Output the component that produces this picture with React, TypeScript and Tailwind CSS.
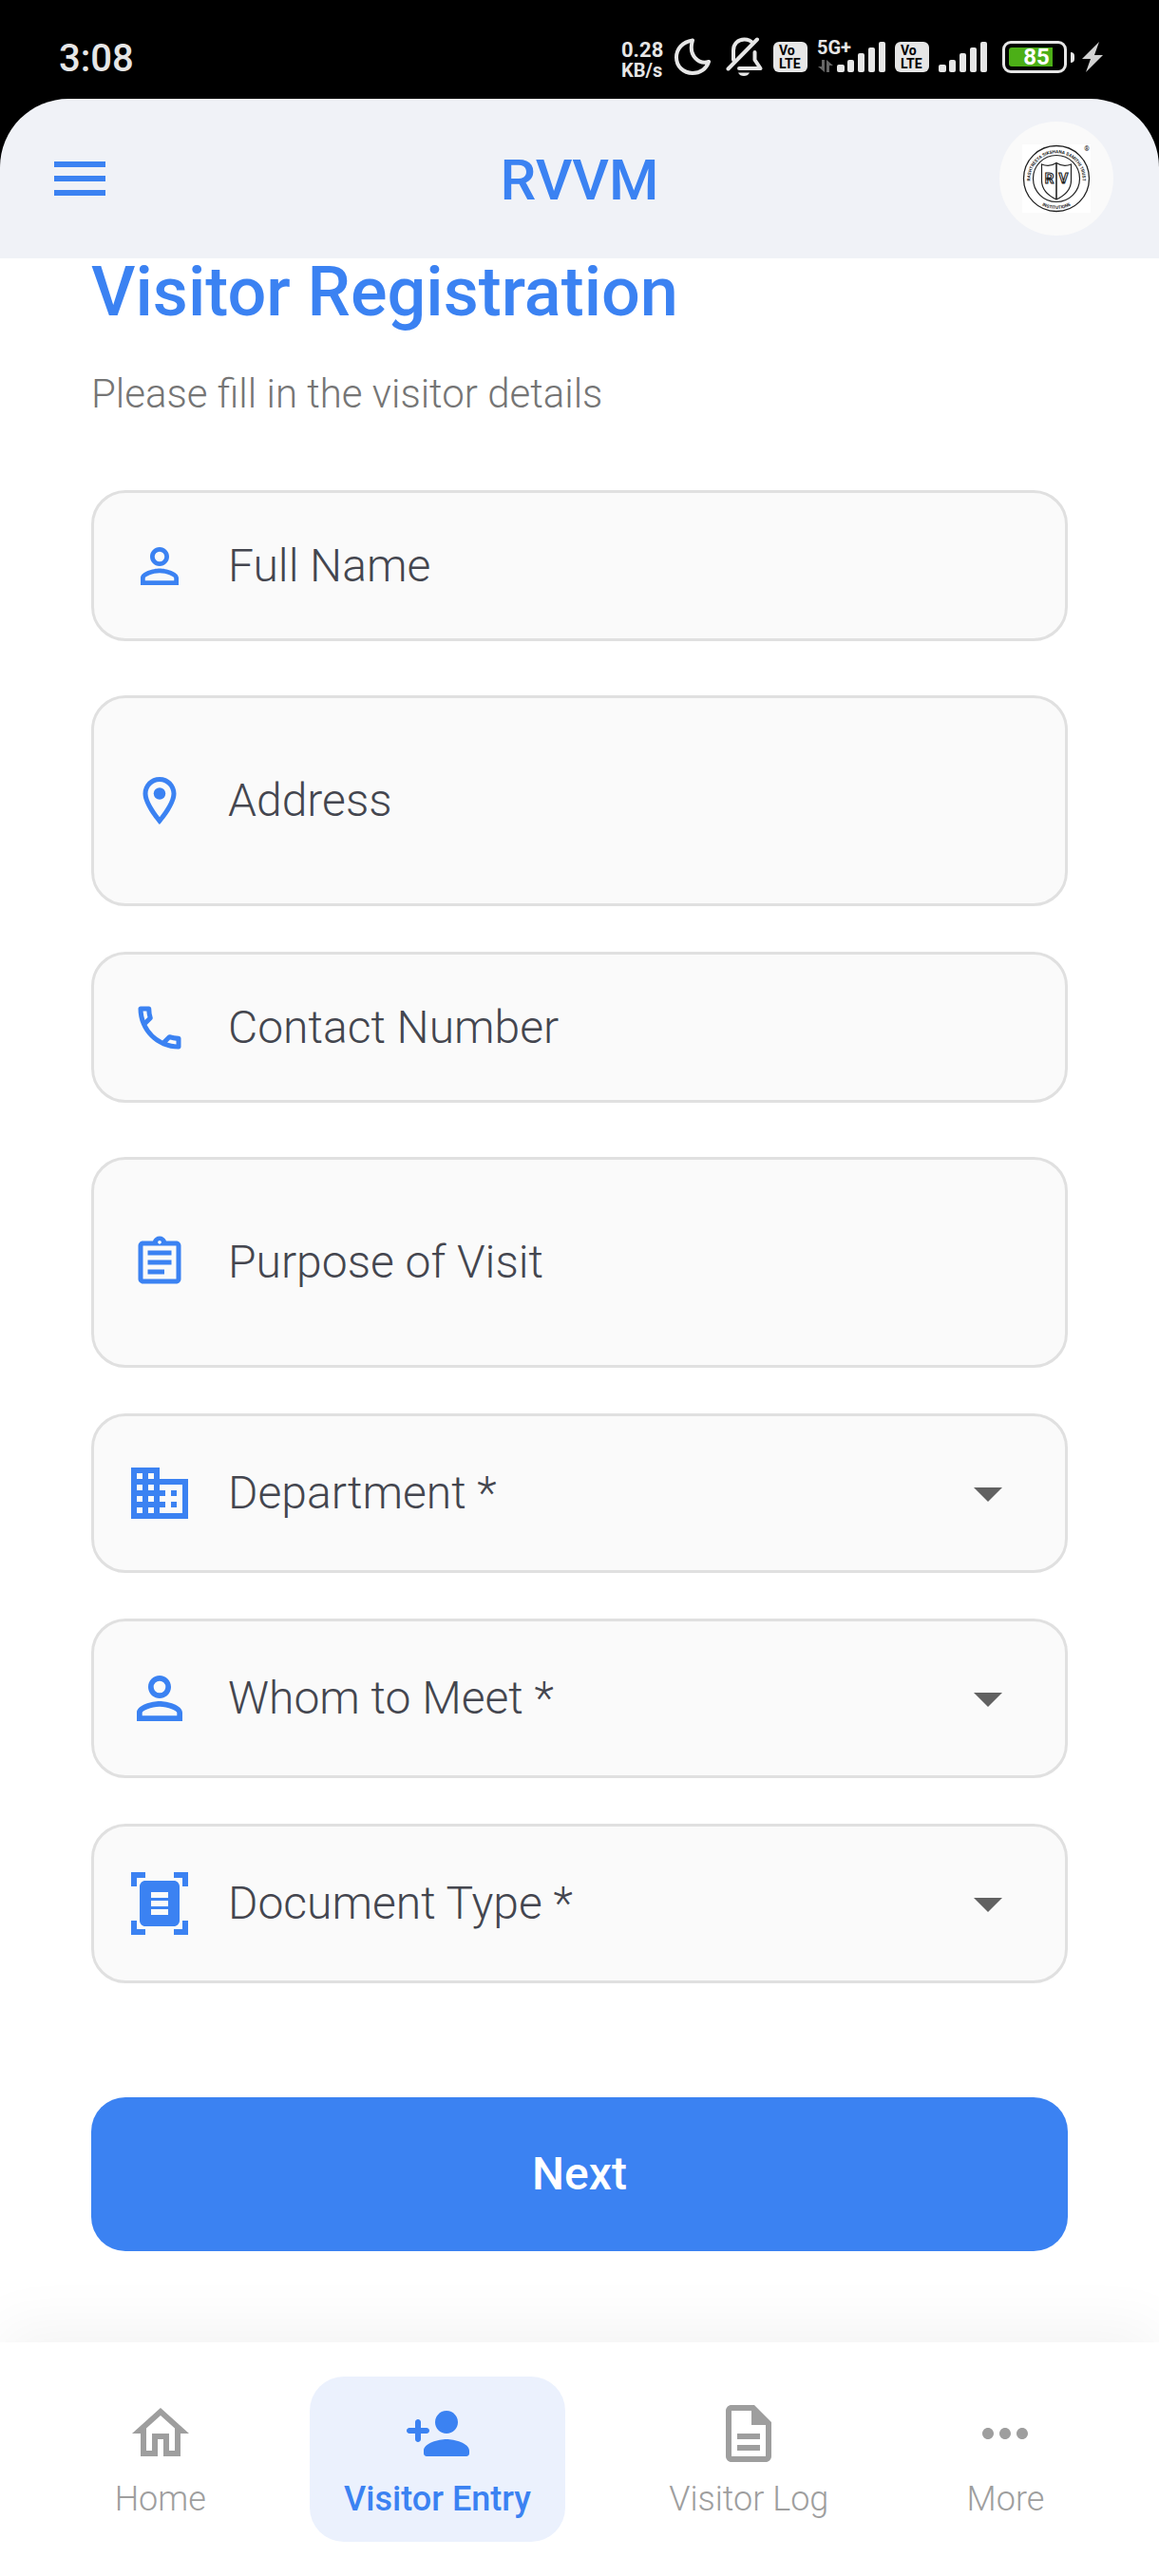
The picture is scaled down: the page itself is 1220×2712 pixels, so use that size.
import type { ReactNode } from "react";
import {
  MdArrowDropDown,
  MdBusiness,
  MdDocumentScanner,
  MdMenu,
  MdMoreHoriz,
  MdOutlineAssignment,
  MdOutlineDescription,
  MdOutlineHome,
  MdOutlineLocationOn,
  MdOutlinePersonOutline,
  MdOutlinePhone,
} from "react-icons/md";

const SIGNAL_BARS = [
  { x: 0, top: 24, width: 8 },
  { x: 11, top: 19, width: 7 },
  { x: 22, top: 12, width: 7 },
  { x: 33, top: 6, width: 7 },
  { x: 44, top: 0, width: 7 },
];

function SignalBars() {
  return (
    <svg width="51" height="32" viewBox="0 0 51 32" fill="#e6e6e6" aria-hidden="true">
      {SIGNAL_BARS.map((bar) => (
        <rect key={bar.x} x={bar.x} y={bar.top} width={bar.width} height={32 - bar.top} rx="2" />
      ))}
    </svg>
  );
}

function VoLteBadge() {
  return (
    <span className="flex h-8 w-9 flex-col justify-center rounded-md bg-[#e6e6e6] pl-1.5 text-sm leading-3.5 font-bold text-black">
      <span>Vo</span>
      <span>LTE</span>
    </span>
  );
}

function MoonIcon() {
  return (
    <svg width="38" height="40" viewBox="0 0 38 40" fill="none" stroke="#e6e6e6" strokeWidth="4" strokeLinejoin="round" aria-hidden="true">
      <path d="M19 2.5C8.500 4 2 11.500 2 20.500 2 30 9.500 37 19 37c8 0 14.500-4.500 17-12-10 3-22-6-17-22.500Z" />
    </svg>
  );
}

function BellOffIcon() {
  return (
    <svg width="40" height="42" viewBox="0 0 40 42" fill="none" stroke="#e6e6e6" strokeWidth="4" strokeLinecap="round" strokeLinejoin="round" aria-hidden="true">
      <path d="M8 24V14C8 7 13 2.500 19.500 2.500c4 0 7 1.500 9 4" />
      <path d="M30.500 16v8l6 9H14" />
      <path d="M2.500 33.500 33 2.500" />
      <path d="M13 37.500h12c-1 2.500-3.500 3.500-6 3.500s-5-1-6-3.500Z" fill="#e6e6e6" stroke="none" />
    </svg>
  );
}

function StatusBar() {
  return (
    <div className="flex h-[104px] items-center justify-between bg-black pr-[59px] pl-[62px] text-[#e6e6e6]">
      <time className="pt-5 text-[40px] leading-[46px] font-medium">3:08</time>
      <div className="flex items-center pt-4">
        <span className="flex w-14 flex-col pt-1.5 font-bold">
          <span className="text-[22px] leading-[22px]">0.28</span>
          <span className="text-[20px] leading-5">KB/s</span>
        </span>
        <MoonIcon />
        <span className="ml-4">
          <BellOffIcon />
        </span>
        <span className="ml-[10px]">
          <VoLteBadge />
        </span>
        <span className="relative ml-[31px]">
          <SignalBars />
          <span className="absolute -top-1 -left-[21px] text-[20px] leading-5 font-bold">5G+</span>
          <svg className="absolute bottom-0 -left-5" width="16" height="13" viewBox="0 0 16 13" fill="#666666" aria-hidden="true">
            <path d="M4 0h3v13L0 7h4ZM9 0l7 6h-4v7H9Z" />
          </svg>
        </span>
        <span className="ml-[10px]">
          <VoLteBadge />
        </span>
        <span className="ml-[10px]">
          <SignalBars />
        </span>
        <span className="relative ml-4 flex h-[34px] w-[68px] items-center rounded-[9px] border-3 border-[#e6e6e6] p-1">
          <span className="h-5 w-[46px] rounded-l-[3px] bg-[#4caf17]" />
          <span className="absolute inset-0 flex items-center justify-center pl-1 text-2xl leading-6 font-bold text-white">85</span>
        </span>
        <span className="ml-1 h-[11px] w-1 rounded-r-sm bg-[#e6e6e6]" />
        <svg className="ml-2" width="22" height="32" viewBox="0 0 22 32" fill="#d2d2d2" aria-hidden="true">
          <path d="M18 0 0 18h9L4 32l18-18h-9Z" />
        </svg>
      </div>
    </div>
  );
}

function InstitutionLogo() {
  return (
    <svg className="size-18 bg-white" viewBox="0 0 72 72" fill="none" stroke="#222222" role="img" aria-label="RV Institutions">
      <defs>
        <path id="crest-top" d="M9 42A27.500 27.500 0 1 1 63 42" />
        <path id="crest-bottom" d="M4 36A32 32 0 0 0 68 36" />
      </defs>
      <circle cx="36" cy="36" r="34.500" strokeWidth="1.300" />
      <circle cx="36" cy="36" r="24.500" strokeWidth="1.200" />
      <path d="M20.500 21c5 2 11 1.500 15.500-1.500 4.500 3 10.500 3.500 15.500 1.500v17c0 9-7 16-15.500 20-8.500-4-15.500-11-15.500-20Z" strokeWidth="1.200" />
      <path d="M36 19.500V58" strokeWidth="1.600" />
      <g fill="#222222" stroke="none" fontFamily="Roboto, sans-serif" fontWeight="700">
        <text fontSize="4.700" textAnchor="middle">
          <textPath href="#crest-top" startOffset="50%">RASHTREEYA SIKSHANA SAMITHI TRUST</textPath>
        </text>
        <text fontSize="4.700" textAnchor="middle">
          <textPath href="#crest-bottom" startOffset="50%">INSTITUTIONS</textPath>
        </text>
        <text x="68" y="6.500" fontSize="7" textAnchor="middle">®</text>
      </g>
      <g fill="#ffffff" strokeWidth="1.100" fontFamily="Roboto, sans-serif" fontWeight="700" fontSize="15" textAnchor="middle">
        <text x="28.500" y="41">R</text>
        <text x="43.500" y="41">V</text>
      </g>
    </svg>
  );
}

function AppBar() {
  return (
    <div className="bg-black">
      <header className="grid grid-cols-[1fr_auto_1fr] items-center rounded-t-[72px] bg-[#f0f2f7] px-12 py-6">
        <button type="button" aria-label="Open menu" className="justify-self-start text-[#3b82f2]">
          <MdMenu className="size-18" />
        </button>
        <h1 className="pt-1 text-6xl leading-[72px] font-medium text-[#3b82f2]">RVVM</h1>
        <div className="flex size-30 items-center justify-center justify-self-end rounded-full bg-[#fafafa]">
          <InstitutionLogo />
        </div>
      </header>
    </div>
  );
}

const FIELD_BOX =
  "relative flex items-center rounded-[36px] border-3 border-[#e0e0e0] bg-[#fafafa] text-5xl font-light text-[#44464f]";

type FieldProps = { id: string; label: string; icon: ReactNode };

function IconLabel({ id, label, icon }: FieldProps) {
  return (
    <label htmlFor={id} aria-label={label} className="mr-[3px] flex w-[138px] shrink-0 items-center justify-center text-[#3b82f2]">
      {icon}
    </label>
  );
}

function TextField({ id, label, icon, type = "text" }: FieldProps & { type?: string }) {
  return (
    <div className={`${FIELD_BOX} mb-[9px]`}>
      <IconLabel id={id} label={label} icon={icon} />
      <input
        id={id}
        type={type}
        aria-label={label}
        placeholder={label}
        className="w-full bg-transparent py-12 leading-[57px] outline-none placeholder:text-[#44464f] placeholder:opacity-100"
      />
    </div>
  );
}

function TextAreaField({ id, label, icon }: FieldProps) {
  return (
    <div className={FIELD_BOX}>
      <IconLabel id={id} label={label} icon={icon} />
      <textarea
        id={id}
        rows={1}
        aria-label={label}
        placeholder={label}
        className="block w-full resize-none overflow-hidden bg-transparent py-18 leading-[72px] outline-none placeholder:text-[#44464f] placeholder:opacity-100"
      />
    </div>
  );
}

function SelectField({ id, label, icon }: FieldProps) {
  return (
    <div className={FIELD_BOX}>
      <IconLabel id={id} label={label} icon={icon} />
      <select
        id={id}
        aria-label={label}
        defaultValue=""
        className="w-full appearance-none bg-transparent py-[45px] leading-[72px] outline-none"
      >
        <option value="" disabled>{label}</option>
      </select>
      <MdArrowDropDown className="pointer-events-none absolute right-[45px] size-18 text-[#616161]" />
    </div>
  );
}

function PersonAddIcon() {
  return (
    <svg className="size-18" viewBox="0 0 24 24" fill="currentColor" aria-hidden="true">
      <path d="M15 12c2.210 0 4-1.790 4-4s-1.790-4-4-4-4 1.790-4 4 1.790 4 4 4zm-9-2V8c0-.550-.450-1-1-1s-1 .450-1 1v2H2c-.550 0-1 .450-1 1s.450 1 1 1h2v2c0 .550.450 1 1 1s1-.450 1-1v-2h2c.550 0 1-.450 1-1s-.450-1-1-1H6zm9 4c-2.670 0-8 1.340-8 4v1c0 .550.450 1 1 1h14c.550 0 1-.450 1-1v-1c0-2.660-5.330-4-8-4z" />
    </svg>
  );
}

function NavItem({ label, icon, active = false }: { label: string; icon: ReactNode; active?: boolean }) {
  return (
    <a
      href="#"
      aria-current={active ? "page" : undefined}
      className={`flex flex-col items-center gap-3 rounded-[36px] px-9 py-6 text-4xl leading-[42px] ${
        active ? "bg-[#ebf1fd] font-medium text-[#3b82f2]" : "font-light text-[#9e9e9e]"
      }`}
    >
      {icon}
      <span className="leading-[42px]">{label}</span>
    </a>
  );
}

export default function App() {
  return (
    <div className="flex min-h-screen flex-col bg-white font-['Roboto',sans-serif]">
      <StatusBar />
      <AppBar />
      <main className="flex-1 px-24 pb-24">
        <h2 className="text-7xl leading-[72px] font-medium text-[#3b82f2]">Visitor Registration</h2>
        <p className="mt-12 text-[42px] leading-[46px] font-light text-[#757575]">Please fill in the visitor details</p>
        <form className="mt-[78px]">
          <div className="flex flex-col gap-12">
            <TextField id="full-name" label="Full Name" icon={<MdOutlinePersonOutline className="size-15" />} />
            <TextAreaField id="address" label="Address" icon={<MdOutlineLocationOn className="size-15" />} />
            <TextField id="contact" label="Contact Number" type="tel" icon={<MdOutlinePhone className="size-15" />} />
            <TextAreaField id="purpose" label="Purpose of Visit" icon={<MdOutlineAssignment className="size-15" />} />
            <SelectField id="department" label="Department *" icon={<MdBusiness className="size-18" />} />
            <SelectField id="whom" label="Whom to Meet *" icon={<MdOutlinePersonOutline className="size-18" />} />
            <SelectField id="document" label="Document Type *" icon={<MdDocumentScanner className="size-18" />} />
          </div>
          <button
            type="button"
            className="mt-30 w-full rounded-[36px] bg-[#3b82f2] py-[53px] text-5xl leading-14 font-medium text-white"
          >
            Next
          </button>
        </form>
      </main>
      <nav className="relative flex justify-around bg-white px-12 py-9 shadow-[0_-15px_60px_rgba(0,0,0,0.05)]">
        <NavItem label="Home" icon={<MdOutlineHome className="size-18" />} />
        <NavItem label="Visitor Entry" icon={<PersonAddIcon />} active />
        <NavItem label="Visitor Log" icon={<MdOutlineDescription className="size-18" />} />
        <NavItem label="More" icon={<MdMoreHoriz className="size-18" />} />
      </nav>
    </div>
  );
}
